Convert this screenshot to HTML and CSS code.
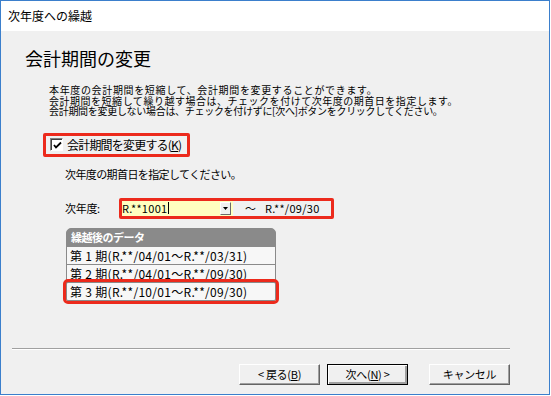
FILE: index.html
```html
<!DOCTYPE html>
<html lang="ja">
<head>
<meta charset="utf-8">
<link rel="stylesheet" href="styles.css">
</head>
<body>
<div class="window">
  <div class="titlebar">次年度への繰越</div>
  <div class="content">
    <h1 class="heading">会計期間の変更</h1>
    <p class="desc"><span class="l1">本年度の会計期間を短縮して、会計期間を変更することができます。</span><br><span class="l2">会計期間を短縮して繰り越す場合は、チェックを付けて次年度の期首日を指定します。</span><br><span class="l3">会計期間を変更しない場合は、チェックを付けずに[次へ]ボタンをクリックしてください。</span></p>
    <div class="check-hl">
      <span class="checkbox"><svg width="9" height="9" viewBox="0 0 9 9"><path d="M1 4 L3 6.5 L8 1.5" fill="none" stroke="#000" stroke-width="1.8"/></svg></span>
      <span class="check-label">会計期間を変更する(<u>K</u>)</span>
    </div>
    <p class="prompt">次年度の期首日を指定してください。</p>
    <div class="date-row">
      <span class="date-label">次年度:</span>
      <div class="date-hl">
        <div class="combo">
          <span class="combo-val">R.**1001</span><span class="caret"></span>
          <span class="dd"><svg width="5" height="3" viewBox="0 0 5 3"><path d="M0 0H5L2.5 3Z" fill="#000"/></svg></span>
        </div>
        <span class="tilde">〜</span>
        <span class="end-date">R.**/09/30</span>
      </div>
    </div>
    <div class="table">
      <div class="thead">繰越後のデータ</div>
      <div class="row">第 1 期(R.**/04/01〜R.**/03/31)</div>
      <div class="row">第 2 期(R.**/04/01〜R.**/09/30)</div>
      <div class="row row-hl">第 3 期(R.**/10/01〜R.**/09/30)</div>
    </div>
    <div class="footer">
      <div class="sep"></div>
      <div class="buttons">
        <button class="btn">&lt; 戻る(<u>B</u>)</button>
        <button class="btn btn-default">次へ(<u>N</u>) &gt;</button>
        <button class="btn btn-cancel">キャンセル</button>
      </div>
    </div>
  </div>
</div>
</body>
</html>
```
FILE: styles.css
```css
* { box-sizing: border-box; }
html, body { margin: 0; padding: 0; background: #fff; }
body {
  font-family: "Noto Sans CJK JP", "Liberation Sans", sans-serif;
  color: #000;
}
.window {
  width: 550px;
  height: 395px;
  border: 1px solid #3b7fcc;
  display: flex;
  flex-direction: column;
  background: #f0f0f0;
}
.titlebar {
  height: 30px;
  background: #fff;
  font-size: 12px;
  line-height: 30px;
  padding-left: 7px;
  color: #000;
}
.content {
  flex: 1;
  display: flex;
  flex-direction: column;
  align-items: flex-start;
  padding: 0 39px 9px 0;
}
.heading {
  margin: 16px 0 0 24px;
  font-size: 18px;
  line-height: 22px;
  font-weight: normal;
}
.desc {
  margin: 16px 0 0 48px;
  font-size: 10px;
  line-height: 10.5px;
  letter-spacing: 0.4px;
}
.desc .l1 { letter-spacing: 0.65px; }
.desc .l2 { letter-spacing: 0.52px; }
.desc .l3 { letter-spacing: -0.3px; }
.check-hl {
  margin: 16px 0 0 42px;
  width: 147px;
  height: 24px;
  border: 3px solid #ec2a1c;
  border-radius: 2px;
  display: flex;
  align-items: center;
  padding-left: 4px;
}
.checkbox {
  width: 13px;
  height: 13px;
  background: #fff;
  border: 1px solid;
  border-color: #808080 #fff #fff #808080;
  box-shadow: inset 1px 1px #404040;
  display: flex;
  align-items: center;
  justify-content: center;
  padding-left: 1px;
  padding-top: 1px;
}
.check-label {
  margin-left: 4px;
  font-size: 12px;
  letter-spacing: -0.8px;
  line-height: 14px;
}
.check-label u, .btn u { text-underline-offset: 1px; }
.prompt {
  margin: 11px 0 0 64px;
  font-size: 11px;
  line-height: 13px;
  letter-spacing: -0.6px;
}
.date-row {
  margin: 17px 0 0 64px;
  display: flex;
  align-items: center;
}
.date-label {
  width: 54px;
  font-size: 11px;
  letter-spacing: -0.3px;
}
.date-hl {
  width: 215px;
  height: 21px;
  border: 3px solid #ec2a1c;
  border-radius: 2px;
  display: flex;
  align-items: center;
}
.combo {
  width: 111px;
  height: 15px;
  background: #ffffc0;
  display: flex;
  align-items: center;
  font-size: 11px;
}
.combo-val { letter-spacing: 0.3px; line-height: 15px; }
.caret {
  width: 1px;
  height: 12px;
  background: #000;
  margin-left: 1px;
}
.dd {
  margin-left: auto;
  margin-right: 2px;
  width: 11px;
  height: 13px;
  background: #f0f0f0;
  border: 1px solid;
  border-color: #fff #6a6a6a #6a6a6a #fff;
  display: flex;
  align-items: center;
  justify-content: center;
}
.tilde {
  margin-left: 12px;
  font-size: 11px;
}
.end-date {
  margin-left: 9px;
  font-size: 11px;
  letter-spacing: 0.3px;
}
.table {
  margin: 9px 0 0 65px;
  width: 210px;
  border: 1px solid #8a8a8a;
  border-radius: 5px 5px 2px 2px;
  background: #8a8a8a;
  display: flex;
  flex-direction: column;
  gap: 1px;
}
.thead {
  height: 17px;
  color: #fff;
  font-weight: bold;
  font-size: 11px;
  line-height: 17px;
  padding-left: 4px;
  letter-spacing: -0.5px;
  border-radius: 4px 4px 0 0;
}
.row {
  height: 17px;
  background: #f7f7f7;
  font-size: 12px;
  line-height: 17px;
  padding-left: 3px;
  white-space: pre;
  letter-spacing: 0.3px;
}
.row-hl {
  outline: 3px solid #ec2a1c;
  outline-offset: 1px;
  border-radius: 1px;
}
.footer {
  margin-top: auto;
  align-self: stretch;
  padding-left: 11px;
}
.sep {
  height: 2px;
  border-top: 1px solid #a0a0a0;
  border-bottom: 1px solid #fff;
}
.buttons {
  margin-top: 14px;
  display: flex;
  justify-content: flex-end;
}
.btn {
  width: 81px;
  height: 21px;
  padding: 0;
  font-family: inherit;
  font-size: 11px;
  color: #000;
  background: #f0f0f0;
  border: 1px solid;
  border-color: #fff #646464 #646464 #fff;
  box-shadow: inset -1px -1px #a0a0a0;
  letter-spacing: -0.3px;
  line-height: 17px;
}
.btn-default {
  margin-left: 7px;
  border: 1px solid #000;
  box-shadow: inset 1px 1px #fff, inset -2px -2px #a0a0a0;
}
.btn-cancel {
  margin-left: 21px;
}
```
